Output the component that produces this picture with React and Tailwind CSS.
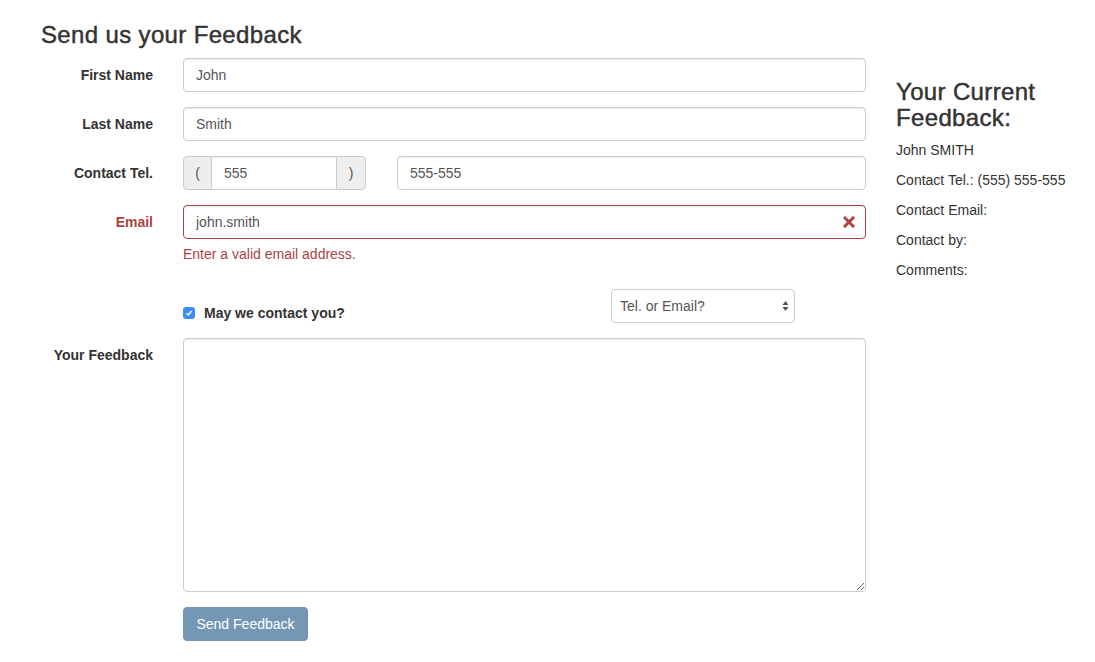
import React, { useState } from "react";

const inputCls =
  "h-[34px] w-full rounded-[4px] border border-[#ccc] bg-white px-[12px] text-[14px] text-[#555] outline-none shadow-[inset_0_1px_1px_rgba(0,0,0,0.075)]";

const FormRow = ({ label, error, children }) => (
  <div className="flex mb-[15px]">
    <label
      className={`w-[142px] shrink-0 pr-[30px] pt-[7px] text-right text-[14px] font-bold leading-5 ${
        error ? "text-[#a94442]" : "text-[#333]"
      }`}
    >
      {label}
    </label>
    <div className="flex-1">{children}</div>
  </div>
);

export default function App() {
  const [first, setFirst] = useState("John");
  const [last, setLast] = useState("Smith");
  const [area, setArea] = useState("555");
  const [num, setNum] = useState("555-555");
  const [email, setEmail] = useState("john.smith");
  const [agree, setAgree] = useState(true);
  const [comments, setComments] = useState("");

  return (
    <div
      className="flex w-[1095px] pt-[22px] text-[14px] leading-5 text-[#333]"
      style={{ fontFamily: '"Liberation Sans", Arial, sans-serif' }}
    >
      {/* Form column */}
      <div className="w-[866px] shrink-0 pl-[41px]">
        <h3 className="mb-[10px] text-[24px] leading-[26.4px] tracking-[0.35px] [-webkit-text-stroke:0.45px_#333]">
          Send us your Feedback
        </h3>

        <FormRow label="First Name">
          <input className={inputCls} value={first} onChange={(e) => setFirst(e.target.value)} />
        </FormRow>

        <FormRow label="Last Name">
          <input className={inputCls} value={last} onChange={(e) => setLast(e.target.value)} />
        </FormRow>

        <FormRow label="Contact Tel.">
          <div className="flex">
            <div className="flex w-[183px] shrink-0">
              <span className="flex h-[34px] w-[29px] shrink-0 items-center justify-center rounded-l-[4px] border border-[#ccc] bg-[#eee] text-[#555]">
                (
              </span>
              <input
                className="h-[34px] w-full min-w-0 border-y border-[#ccc] bg-white px-[12px] text-[14px] text-[#555] outline-none shadow-[inset_0_1px_1px_rgba(0,0,0,0.075)]"
                value={area}
                onChange={(e) => setArea(e.target.value)}
              />
              <span className="flex h-[34px] w-[30px] shrink-0 items-center justify-center rounded-r-[4px] border border-[#ccc] bg-[#eee] text-[#555]">
                )
              </span>
            </div>
            <div className="ml-[31px] flex-1">
              <input className={inputCls} value={num} onChange={(e) => setNum(e.target.value)} />
            </div>
          </div>
        </FormRow>

        <FormRow label="Email" error>
          <div className="relative">
            <input
              className="h-[34px] w-full rounded-[4px] border border-[#a94442] bg-white pl-[12px] pr-[42px] text-[14px] text-[#555] outline-none shadow-[inset_0_1px_1px_rgba(0,0,0,0.075)]"
              value={email}
              onChange={(e) => setEmail(e.target.value)}
            />
            <span className="absolute right-0 top-0 flex h-[34px] w-[34px] items-center justify-center">
              <svg width="12" height="12" viewBox="0 0 12 12">
                <path d="M2 2 L10 10 M10 2 L2 10" stroke="#a94442" strokeWidth="3" strokeLinecap="square" />
              </svg>
            </span>
          </div>
          <div className="mb-[10px] mt-[5px] text-[#a94442]">Enter a valid email address.</div>
        </FormRow>

        <div className="mb-[15px] flex h-[34px] pl-[142px]">
          <label className="flex w-[428px] shrink-0 cursor-pointer items-start pt-[14px]">
            <span
              onClick={() => setAgree(!agree)}
              className={`mt-[4px] flex h-[12px] w-[12px] items-center justify-center rounded-[3px] ${
                agree ? "bg-[#3b8ef5]" : "border border-[#aaa] bg-white"
              }`}
            >
              {agree && (
                <svg width="8" height="8" viewBox="0 0 8 8">
                  <path d="M1.5 4.2 L3.2 5.9 L6.6 2" fill="none" stroke="#fff" strokeWidth="1.4" />
                </svg>
              )}
            </span>
            <span className="ml-[9px] font-bold">May we contact you?</span>
          </label>
          <div className="relative w-[184px]">
            <select className="h-[34px] w-full appearance-none rounded-[4px] border border-[#ccc] bg-white pl-[8px] text-[14px] text-[#555] outline-none">
              <option>Tel. or Email?</option>
              <option>Tel.</option>
              <option>Email</option>
            </select>
            <svg className="pointer-events-none absolute right-[6px] top-[11px]" width="7" height="12" viewBox="0 0 7 12">
              <path d="M3.5 1 L6.5 5 L0.5 5 Z M3.5 11 L6.5 7 L0.5 7 Z" fill="#555" />
            </svg>
          </div>
        </div>

        <FormRow label="Your Feedback">
          <textarea
            className="block h-[254px] w-full rounded-[4px] border border-[#ccc] bg-white px-[12px] py-[6px] text-[14px] text-[#555] outline-none shadow-[inset_0_1px_1px_rgba(0,0,0,0.075)]"
            value={comments}
            onChange={(e) => setComments(e.target.value)}
          />
        </FormRow>

        <div className="pl-[142px]">
          <button className="h-[34px] w-[125px] rounded-[4px] border border-[#7094b3] bg-[#7397b5] text-[14px] text-white">
            Send Feedback
          </button>
        </div>
      </div>

      {/* Live preview */}
      <div className="flex-1 pl-[30px] pt-[57px]">
        <h3 className="mb-[8px] text-[24px] leading-[26.4px] tracking-[0.35px] [-webkit-text-stroke:0.45px_#333]">
          Your Current
          <br />
          Feedback:
        </h3>
        <p className="mb-[10px]">
          {first} {last.toUpperCase()}
        </p>
        <p className="mb-[10px]">
          Contact Tel.: ({area}) {num}
        </p>
        <p className="mb-[10px]">Contact Email:</p>
        <p className="mb-[10px]">Contact by:</p>
        <p className="mb-[10px]">Comments: {comments}</p>
      </div>
    </div>
  );
}
